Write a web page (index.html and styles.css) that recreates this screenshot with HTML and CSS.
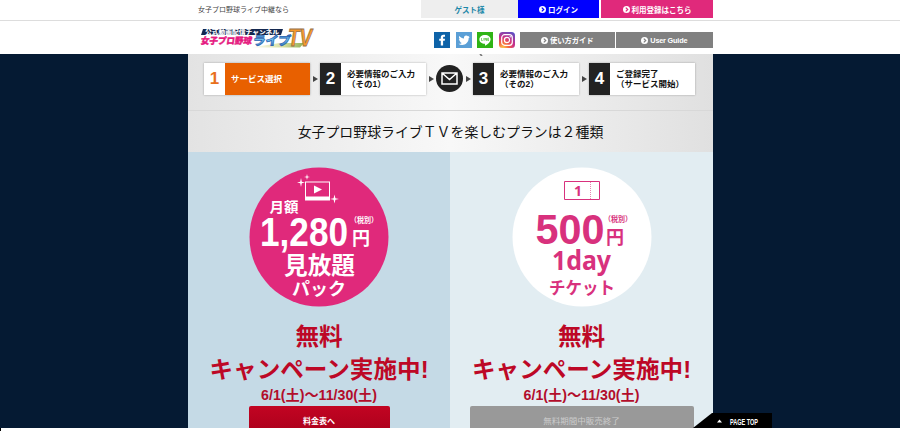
FILE: index.html
```html
<!DOCTYPE html>
<html lang="ja">
<head>
    <meta charset="UTF-8">
    <title>女子プロ野球ライブTV</title>
    <link rel="stylesheet" href="styles.css">
</head>
<body>
    <svg class="defs">
        <symbol id="chevron" viewBox="0 0 8 8">
            <circle cx="4" cy="4" r="4" fill="#fff"/>
            <path d="M3.2 1.8L5.4 4L3.2 6.2" fill="none" stroke="currentColor" stroke-width="1.4"/>
        </symbol>
    </svg>

    <header>
        <div class="top">
            <div class="inner">
                <p class="lead">女子プロ野球ライブ中継なら</p>
                <a class="guest">ゲスト様</a>
                <a class="login"><svg><use href="#chevron"/></svg>ログイン</a>
                <a class="signup"><svg><use href="#chevron"/></svg>利用登録はこちら</a>
            </div>
        </div>
        <div class="inner nav">
            <svg class="logo" viewBox="0 0 114 24">
                <defs>
                    <linearGradient id="sky" x1="0" y1="0" x2="0" y2="1">
                        <stop offset="0" stop-color="#1b4fa8"/>
                        <stop offset=".5" stop-color="#6fc4ee"/>
                        <stop offset="1" stop-color="#1b4fa8"/>
                    </linearGradient>
                    <linearGradient id="grass" x1="0" x2="1">
                        <stop offset="0" stop-color="#fff"/>
                        <stop offset=".6" stop-color="#d9dfa0"/>
                        <stop offset="1" stop-color="#8fae5a"/>
                    </linearGradient>
                </defs>
                <path d="M50 21.5L80 17H104L100 21.5Z" fill="url(#grass)"/>
                <path d="M3 3H83L81 9H1Z" fill="#142850"/>
                <text x="5" y="8.2" textLength="74" lengthAdjust="spacingAndGlyphs" class="logo-sub">公式動画配信チャンネル</text>
                <g transform="skewX(-8)">
                    <text x="3" y="18" textLength="51" lengthAdjust="spacingAndGlyphs" class="logo-pink">女子プロ野球</text>
                    <text x="55" y="19.5" textLength="38" lengthAdjust="spacingAndGlyphs" class="logo-blue">ライブ</text>
                </g>
                <text x="88" y="20" textLength="24" lengthAdjust="spacingAndGlyphs" class="logo-tv">TV</text>
            </svg>
            <ul class="sns">
                <li><svg viewBox="0 0 16 16"><rect width="16" height="16" fill="#0e63a8"/><path d="M6.8 13.6V8.8H5.2V6.8H6.8V5.3C6.8 3.6 7.8 2.7 9.4 2.7H11V4.7H10C9.3 4.7 9.1 5 9.1 5.6V6.8H11L10.7 8.8H9.1V13.6Z" fill="#fff"/></svg></li>
                <li><svg viewBox="0 0 16 16"><rect width="16" height="16" fill="#5b9fd6"/><path d="M2.5 11.8C4 11.9 5 11.5 5.8 10.9C4.7 10.8 4 10.2 3.7 9.3H4.7C3.6 8.9 2.9 8.1 2.9 6.9L4 7.2C2.9 6.3 2.7 5.1 3.3 4C4.6 5.5 6.1 6.3 8 6.4C7.7 4.7 8.8 3.5 10.2 3.5C11 3.5 11.5 3.8 12 4.3L13.5 3.8L12.5 5.1L13.8 4.9L12.7 6.1C12.7 10.5 9.5 13 6.3 13C4.8 13 3.6 12.6 2.5 11.8Z" fill="#fff"/></svg></li>
                <li><svg viewBox="0 0 16 16"><rect width="16" height="16" fill="#2fb416"/><path d="M8 3C11.3 3 13.6 4.9 13.6 7.4C13.6 9.9 10.9 11.9 8 13.8V11.7C4.7 11.7 2.4 9.9 2.4 7.4C2.4 4.9 4.7 3 8 3Z" fill="#fff"/><path d="M4.5 6V8.6H5.8M6.9 6V8.6M8 8.6V6L9.5 8.6V6M12 6.2H10.7V8.5H12M10.7 7.3H12" fill="none" stroke="#2fb416" stroke-width=".6"/></svg></li>
                <li>
                    <svg viewBox="0 0 16 16">
                        <defs>
                            <radialGradient id="insta" cx=".25" cy="1" r="1.15">
                                <stop offset="0" stop-color="#fdc84f"/>
                                <stop offset=".3" stop-color="#f5693f"/>
                                <stop offset=".6" stop-color="#cc2f88"/>
                                <stop offset="1" stop-color="#5751c8"/>
                            </radialGradient>
                        </defs>
                        <rect width="16" height="16" rx="3.5" fill="url(#insta)"/>
                        <g fill="none" stroke="#fff" stroke-width="1.2">
                            <rect x="2.7" y="2.7" width="10.6" height="10.6" rx="3"/>
                            <circle cx="8" cy="8" r="2.6"/>
                        </g>
                        <circle cx="11.2" cy="4.8" r=".7" fill="#fff"/>
                    </svg>
                </li>
            </ul>
            <a class="guide"><svg><use href="#chevron"/></svg>使い方ガイド</a>
            <a class="guide"><svg><use href="#chevron"/></svg>User Guide</a>
        </div>
    </header>

    <main>
        <div class="wrap">
            <div class="steps">
                <span class="caret"></span>
                <div class="step on"><b>1</b><p>サービス選択</p></div>
                <i></i>
                <div class="step"><b>2</b><p>必要情報のご入力<br>（その1）</p></div>
                <i></i>
                <svg class="mail" viewBox="0 0 27 27">
                    <circle cx="13.5" cy="13.5" r="13.5" fill="#222"/>
                    <path d="M6 8H21V19H6ZM6 8L13.5 14.5L21 8" fill="none" stroke="#fff" stroke-width="1.5"/>
                </svg>
                <i></i>
                <div class="step"><b>3</b><p>必要情報のご入力<br>（その2）</p></div>
                <i></i>
                <div class="step"><b>4</b><p>ご登録完了<br>（サービス開始）</p></div>
            </div>

            <h1>女子プロ野球ライブＴＶを楽しむプランは２種類</h1>

            <div class="plans">
                <section class="plan pack">
                    <svg class="badge" viewBox="0 0 140 140">
                        <circle cx="70" cy="70" r="69.5" fill="#e0297b"/>
                        <g fill="#fff">
                            <path d="M56 14.5H81V33.5H56ZM57 15.5V29.5H80V15.5Z" fill-rule="evenodd"/>
                            <path d="M65 18.5L73 22.5L65 26.5Z"/>
                            <path d="M52 11L52.8 14.7L56 15.5L52.8 16.3L52 20L51.2 16.3L48 15.5L51.2 14.7Z"/>
                            <path d="M58 7L58.6 9.5L61 10L58.6 10.5L58 13L57.4 10.5L55 10L57.4 9.5Z"/>
                            <path d="M85.5 27.5L86.4 31.2L90 32L86.4 32.8L85.5 36.5L84.6 32.8L81 32L84.6 31.2Z"/>
                            <text x="20.5" y="44.5" font-size="14" textLength="29" lengthAdjust="spacingAndGlyphs">月額</text>
                            <text x="11" y="79" font-size="41" textLength="88" lengthAdjust="spacingAndGlyphs" class="num">1,280</text>
                            <text x="101" y="55.5" font-size="7.5" textLength="28" lengthAdjust="spacingAndGlyphs">（税別）</text>
                            <text x="103" y="78" font-size="18">円</text>
                            <text x="35" y="107" font-size="23.5" textLength="71" lengthAdjust="spacingAndGlyphs">見放題</text>
                            <text x="43" y="127.5" font-size="17.5" textLength="54" lengthAdjust="spacingAndGlyphs">パック</text>
                        </g>
                    </svg>
                    <h2>無料<br>キャンペーン実施中!</h2>
                    <p class="term">6/1(土)～11/30(土)</p>
                    <a class="btn">料金表へ</a>
                </section>
                <section class="plan day">
                    <svg class="badge" viewBox="0 0 140 140">
                        <circle cx="70" cy="70" r="69.5" fill="#fff"/>
                        <path d="M52.5 14.5H87.5V32.5H52.5Z" fill="none" stroke="#d8317d" stroke-width="1"/>
                        <path d="M78.5 15V32" stroke="#d8317d" stroke-width=".6" stroke-dasharray="1 1"/>
                        <g fill="#d8317d">
                            <text x="62" y="28.5" font-size="14" class="sans">1</text>
                            <text x="23.5" y="76.5" font-size="42" textLength="69" lengthAdjust="spacingAndGlyphs" class="num">500</text>
                            <text x="92" y="54.5" font-size="7.5" textLength="28" lengthAdjust="spacingAndGlyphs">（税別）</text>
                            <text x="94" y="76.5" font-size="18">円</text>
                            <text x="40" y="103" font-size="26" textLength="59" lengthAdjust="spacingAndGlyphs" class="sans">1day</text>
                            <text x="37" y="127" font-size="17.5" textLength="66" lengthAdjust="spacingAndGlyphs">チケット</text>
                        </g>
                    </svg>
                    <h2>無料<br>キャンペーン実施中!</h2>
                    <p class="term">6/1(土)～11/30(土)</p>
                    <a class="btn off">無料期間中販売終了</a>
                </section>
            </div>
        </div>
        <a class="pagetop">
            <svg viewBox="0 0 79 15">
                <path d="M0 15L19 0H79V15Z"/>
                <path d="M24 9.5L26.5 6.5L29 9.5Z" fill="#fff"/>
                <text x="37" y="12" textLength="28" lengthAdjust="spacingAndGlyphs">PAGE TOP</text>
            </svg>
        </a>
    </main>
    <footer></footer>
</body>
</html>
```
FILE: styles.css
```css
*{
    box-sizing: border-box;
    margin: 0;
    padding: 0;
}

body{
    height: 431px;
    overflow: hidden;
    background: #fff;
    font-family: "Liberation Sans","Noto Sans CJK JP",sans-serif;
    color: #111;
}

.defs{
    position: absolute;
    width: 0;
    height: 0;
}

.inner,.wrap{
    width: 525px;
    margin-left: 188px;
}

/* header */
.top{
    height: 21px;
    border-bottom: 1px solid #ddd;
}

.top .inner{
    display: flex;
    height: 18px;
}

.top a,.guide{
    display: flex;
    align-items: center;
    justify-content: center;
    font-size: 7.5px;
    font-weight: bold;
    color: #fff;
}

.top a svg,.guide svg{
    width: 7px;
    height: 7px;
    margin-right: 2px;
}

.lead{
    flex: 1;
    padding-left: 10px;
    font-size: 7px;
    line-height: 19px;
    color: #444;
}

.top .guest{
    width: 97px;
    background: #eee;
    color: #1b87a8;
}

.top .login{
    width: 81px;
    background: #00f;
}

.top .login svg{
    color: #00f;
}

.top .signup{
    width: 112px;
    margin-left: 2px;
    background: #e0297b;
}

.top .signup svg{
    color: #e0297b;
}

.nav{
    display: flex;
    height: 33px;
    padding-top: 11px;
}

.logo{
    width: 114px;
    height: 24px;
    margin: -6px 120px 0 12px;
    overflow: visible;
}

.logo text{
    font-family: "Noto Sans CJK JP",sans-serif;
    font-weight: 900;
}

.logo-sub{
    font-size: 5.5px;
    fill: #fff;
}

.logo-pink{
    font-size: 9px;
    fill: #e5197f;
    stroke: #e5197f;
    stroke-width: .4;
}

.logo-blue{
    font-size: 12px;
    fill: url(#sky);
    stroke: #2a62b0;
    stroke-width: .7;
}

.logo .logo-tv{
    font-family: "Liberation Sans",sans-serif;
    font-size: 24px;
    font-style: italic;
    fill: #f79a2c;
    stroke: #96704a;
    stroke-width: .8;
}

.sns{
    display: flex;
    gap: 5.6px;
    margin-right: 5px;
    list-style: none;
}

.sns svg{
    display: block;
    width: 16px;
    height: 16px;
}

.guide{
    width: 95px;
    height: 16px;
    margin-right: 1px;
    background: #808080;
    font-size: 7.3px;
}

.guide:last-child{
    width: 97px;
    margin-right: 0;
    letter-spacing: -.2px;
}

.guide svg{
    color: #808080;
}

/* main */
main{
    position: relative;
    height: 374px;
    overflow: hidden;
    background: #051a33;
}

.wrap{
    background: linear-gradient(to right,#e3e3e3,#f8f8f8 50%,#e0e0e0);
}

.steps{
    position: relative;
    display: flex;
    align-items: center;
    height: 57px;
    padding: 0 17px 7px 16px;
    border-bottom: 1px solid #d8d8d8;
}

.caret{
    position: absolute;
    top: 0;
    left: 289px;
    width: 5px;
    height: 2px;
    border-right: 2px solid #777;
    transform: skewX(35deg);
}

.step{
    display: flex;
    width: 106px;
    height: 32px;
    background: #fff;
    box-shadow: 0 0 2px rgba(0,0,0,.3);
}

.step b{
    width: 21px;
    background: #222;
    color: #fff;
    font-size: 17px;
    line-height: 32px;
    text-align: center;
}

.step p{
    align-self: center;
    padding-left: 6px;
    font-size: 8.5px;
    font-weight: bold;
    line-height: 10px;
    white-space: nowrap;
}

.step.on{
    background: #e86000;
}

.step.on b{
    background: #fff;
    color: #e8701c;
}

.step.on p{
    color: #fff;
}

.steps i{
    margin: 0 2px 0 3px;
    border-left: 5px solid #444;
    border-top: 3px solid transparent;
    border-bottom: 3px solid transparent;
}

.mail{
    width: 27px;
    height: 27px;
}

h1{
    height: 41px;
    font-size: 13.9px;
    font-weight: normal;
    line-height: 42px;
    text-align: center;
}

.plans{
    display: flex;
    height: 276px;
}

.plan{
    display: flex;
    flex-direction: column;
    align-items: center;
    width: 262px;
    padding-top: 15px;
    background: #c5dae6;
}

.day{
    width: 263px;
    background: #e2edf2;
}

.badge{
    flex: none;
    width: 140px;
    height: 140px;
}

.badge text{
    font-family: "Noto Sans CJK JP",sans-serif;
    font-weight: bold;
}

.badge .num{
    font-family: "Liberation Sans",sans-serif;
}

.badge .sans{
    font-family: "Noto Sans",sans-serif;
}

h2{
    margin-top: 14px;
    font-size: 23.6px;
    line-height: 33px;
    color: #bd0826;
    text-align: center;
    white-space: nowrap;
}

.term{
    margin: -2px 0 1px;
    font-size: 14.2px;
    font-weight: bold;
    line-height: 20px;
    color: #b20d2b;
}

.btn{
    width: 141px;
    height: 31px;
    border-radius: 2px;
    background: linear-gradient(#c20422,#a8001b);
    font-size: 8px;
    font-weight: bold;
    line-height: 31px;
    color: #fff;
    text-align: center;
}

.btn.off{
    width: 224px;
    background: #999;
    font-size: 8.5px;
    font-weight: normal;
    color: #ccc;
}

.pagetop{
    position: absolute;
    left: 693px;
    bottom: 0;
    width: 79px;
    height: 15px;
}

.pagetop svg{
    display: block;
}

.pagetop text{
    font-family: "Liberation Sans",sans-serif;
    font-size: 8.5px;
    font-weight: bold;
    fill: #fff;
}

footer{
    width: 1px;
    height: 3px;
    background: #000;
}
```
